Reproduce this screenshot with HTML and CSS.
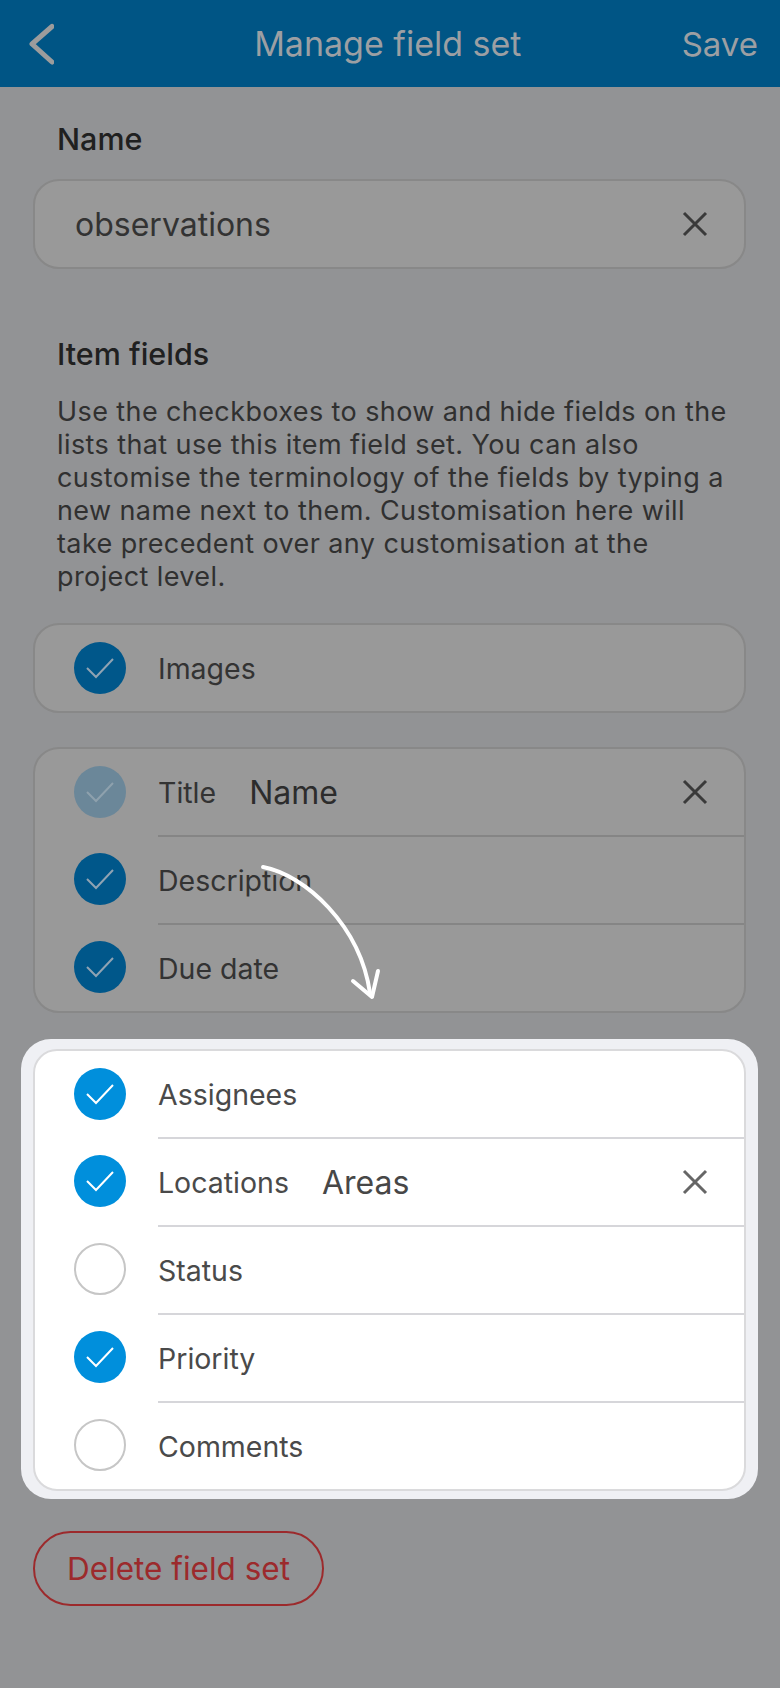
FILE: index.html
```html
<!DOCTYPE html>
<html lang="en">
<head>
    <meta charset="UTF-8">
    <meta name="viewport" content="width=device-width, initial-scale=1.0">
    <title>Manage field set</title>
    <link rel="stylesheet" href="styles.css">
</head>
<body>
    <header class="topbar">
        <svg class="back" width="30" height="44" viewBox="0 0 30 44">
            <path d="M28 4.5 L8 22 L28 40" fill="none" stroke="#9c9c9c" stroke-width="5" stroke-linecap="round" stroke-linejoin="round"/>
        </svg>
        <div class="topbar-title">Manage field set</div>
        <div class="topbar-action">Save</div>
    </header>

    <main class="page">
        <h2 class="label">Name</h2>
        <div class="input">
            <span class="input-value">observations</span>
            <svg class="clear" width="26" height="26" viewBox="0 0 26 26">
                <path d="M2 2 L24 24 M24 2 L2 24" stroke="#3a3a3a" stroke-width="3"/>
            </svg>
        </div>

        <h2 class="label label-fields">Item fields</h2>
        <p class="hint">Use the checkboxes to show and hide fields on the lists that use this item field set. You can also customise the terminology of the fields by typing a new name next to them. Customisation here will take precedent over any customisation at the project level.</p>

        <div class="card">
            <div class="row">
                <span class="check on"><svg viewBox="0 0 52 52"><path d="M13 26 L22 35 L39 17" fill="none" stroke="#8fa3b3" stroke-width="2"/></svg></span>
                <div class="row-body"><span class="field">Images</span></div>
            </div>
        </div>

        <div class="card">
            <div class="row">
                <span class="check disabled"><svg viewBox="0 0 52 52"><path d="M13 26 L22 35 L39 17" fill="none" stroke="#8ea1ad" stroke-width="2"/></svg></span>
                <div class="row-body">
                    <span class="field">Title</span>
                    <span class="rename">Name</span>
                    <svg class="clear" width="26" height="26" viewBox="0 0 26 26">
                        <path d="M2 2 L24 24 M24 2 L2 24" stroke="#3a3a3a" stroke-width="3"/>
                    </svg>
                </div>
            </div>
            <div class="row">
                <span class="check on"><svg viewBox="0 0 52 52"><path d="M13 26 L22 35 L39 17" fill="none" stroke="#8fa3b3" stroke-width="2"/></svg></span>
                <div class="row-body"><span class="field">Description</span></div>
            </div>
            <div class="row">
                <span class="check on"><svg viewBox="0 0 52 52"><path d="M13 26 L22 35 L39 17" fill="none" stroke="#8fa3b3" stroke-width="2"/></svg></span>
                <div class="row-body"><span class="field">Due date</span></div>
            </div>
        </div>

        <div class="focus">
            <div class="card card-light">
                <div class="row">
                    <span class="check on"><svg viewBox="0 0 52 52"><path d="M13 26 L22 35 L39 17" fill="none" stroke="#fff" stroke-width="2"/></svg></span>
                    <div class="row-body"><span class="field">Assignees</span></div>
                </div>
                <div class="row">
                    <span class="check on"><svg viewBox="0 0 52 52"><path d="M13 26 L22 35 L39 17" fill="none" stroke="#fff" stroke-width="2"/></svg></span>
                    <div class="row-body">
                        <span class="field">Locations</span>
                        <span class="rename">Areas</span>
                        <svg class="clear" width="26" height="26" viewBox="0 0 26 26">
                            <path d="M2 2 L24 24 M24 2 L2 24" stroke="#666" stroke-width="3"/>
                        </svg>
                    </div>
                </div>
                <div class="row">
                    <span class="check"></span>
                    <div class="row-body"><span class="field">Status</span></div>
                </div>
                <div class="row">
                    <span class="check on"><svg viewBox="0 0 52 52"><path d="M13 26 L22 35 L39 17" fill="none" stroke="#fff" stroke-width="2"/></svg></span>
                    <div class="row-body"><span class="field">Priority</span></div>
                </div>
                <div class="row">
                    <span class="check"></span>
                    <div class="row-body"><span class="field">Comments</span></div>
                </div>
            </div>
        </div>

        <button class="delete">Delete field set</button>

        <!-- hand drawn arrow pointing at the highlighted list -->
        <svg class="arrow" width="140" height="160" viewBox="0 0 140 160">
            <path d="M13 12 C55 20 110 70 120 138" fill="none" stroke="#fff" stroke-width="4" stroke-linecap="round"/>
            <path d="M103 126 L122 142 L128 116" fill="none" stroke="#fff" stroke-width="4" stroke-linecap="round" stroke-linejoin="round"/>
        </svg>
    </main>
</body>
</html>
```

FILE: styles.css
```css
body {
    font-family: Inter, 'Noto Sans', sans-serif;
    background-color: #929395;
    margin: 0;
    padding: 0;
    min-height: 1688px;
}
.topbar {
    height: 87px;
    background-color: #005585;
    display: flex;
    align-items: center;
    padding: 0 22px 0 24px;
    box-sizing: border-box;
}
.back {
    display: block;
    flex: none;
}
.topbar-title {
    flex: 1;
    text-align: center;
    color: #9c9fa3;
    font-size: 34px;
    margin-left: 40px;
}
.topbar-action {
    color: #9c9fa3;
    font-size: 33px;
}
.page {
    position: relative;
    padding: 32px 34px 0 33px;
}
.label {
    margin: 0 0 0 24px;
    font-size: 30.5px;
    font-weight: 500;
    color: #202020;
    line-height: 40px;
}
.input {
    margin-top: 20px;
    height: 90px;
    box-sizing: border-box;
    background-color: #999999;
    border: 2px solid #888888;
    border-radius: 26px;
    display: flex;
    align-items: center;
    padding: 0 36px 0 40px;
}
.input-value {
    flex: 1;
    font-size: 32px;
    color: #333;
}
.clear {
    display: block;
    flex: none;
}
.label-fields {
    margin-top: 65px;
}
.hint {
    margin: 21px 0 30px 24px;
    font-size: 27px;
    letter-spacing: 0.4px;
    line-height: 33px;
    color: #303030;
}
.card {
    background-color: #999999;
    border: 2px solid #888888;
    border-radius: 26px;
    margin-bottom: 34px;
    overflow: hidden;
}
.row {
    display: flex;
    align-items: center;
    height: 86px;
}
.row + .row {
    height: 88px;
}
.row + .row .row-body {
    border-top: 2px solid #858585;
}
.check {
    flex: none;
    width: 52px;
    height: 52px;
    box-sizing: border-box;
    border-radius: 50%;
    margin: 0 32px 0 39px;
    background-color: #fff;
    border: 2px solid #c6c6c6;
}
.check svg {
    display: block;
    width: 52px;
    height: 52px;
}
.check.on {
    background-color: #00578a;
    border: none;
}
.check.disabled {
    background-color: #6b8799;
    border: none;
}
.row-body {
    flex: 1;
    align-self: stretch;
    display: flex;
    align-items: center;
    padding-right: 36px;
    box-sizing: border-box;
}
.field {
    font-size: 28.5px;
    color: #333;
}
.rename {
    flex: 1;
    margin-left: 33px;
    font-size: 32px;
    color: #2c2c2c;
}
.focus {
    margin: -8px -12px 32px -12px;
    padding: 10px 12px 8px 12px;
    background-color: #eff0f4;
    border-radius: 30px;
}
.card-light {
    background-color: #ffffff;
    border: 2px solid #dadadc;
    margin-bottom: 0;
    border-radius: 24px;
}
.card-light .row + .row .row-body {
    border-top: 2px solid #d6d6da;
}
.card-light .field {
    color: #4a4a4a;
}
.card-light .rename {
    color: #474747;
}
.card-light .check.on {
    background-color: #008fdc;
}
.delete {
    font-family: Inter, 'Noto Sans', sans-serif;
    height: 75px;
    padding: 0 32px;
    background: transparent;
    border: 2px solid #9c2a2c;
    border-radius: 38px;
    color: #9c2a2c;
    font-size: 31.5px;
    cursor: pointer;
}
.arrow {
    position: absolute;
    left: 250px;
    top: 768px;
}
```
